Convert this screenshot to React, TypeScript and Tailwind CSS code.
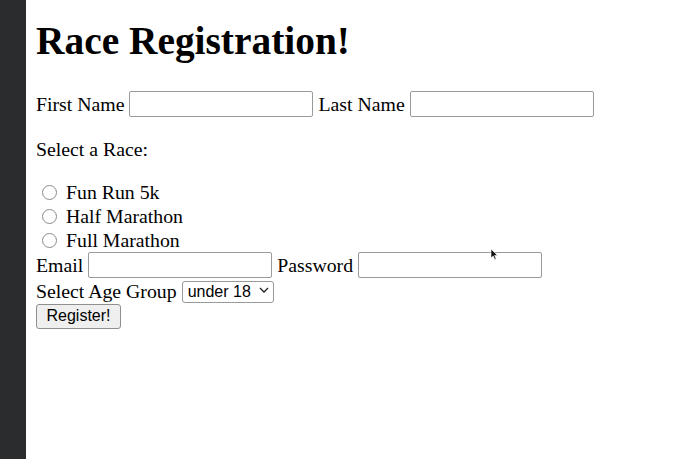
import React from "react";

const serif = { fontFamily: '"Liberation Serif", "Times New Roman", serif' };

function TextInput({ type = "text" }: { type?: string }) {
  return (
    <input
      type={type}
      className="w-[184px] h-[26px] border border-[#9a9a9a] rounded-[2px] bg-white px-1 outline-none"
    />
  );
}

function Radio({ label }: { label: string }) {
  return (
    <label className="flex items-center h-[24px] leading-[24px]">
      <span className="ml-[6px] mr-[9px] w-[15px] h-[15px] rounded-full border border-[#8c8c8c] bg-white shrink-0" />
      <input type="radio" name="race" className="hidden" />
      {label}
    </label>
  );
}

export default function App() {
  return (
    <div
      className="flex h-[459px] w-full bg-white text-black text-[19.8px] leading-[22px] relative overflow-hidden"
      style={serif}
    >
      <div className="w-[26px] shrink-0 bg-[#2b2c2e]" />

      <main className="flex-1 pl-[10px] flex flex-col">
        <h1 className="mt-[19px] text-[39.4px] leading-[45px] font-bold">
          Race Registration!
        </h1>

        <div className="mt-[27px] flex items-center h-[26px] gap-[5px]">
          <span>First Name</span>
          <TextInput />
          <span>Last Name</span>
          <TextInput />
        </div>

        <p className="mt-[21px]">Select a Race:</p>

        <div className="mt-[20px] flex flex-col">
          <Radio label="Fun Run 5k" />
          <Radio label="Half Marathon" />
          <Radio label="Full Marathon" />
        </div>

        <div className="flex items-center h-[26px] gap-[5px]">
          <span>Email</span>
          <TextInput type="email" />
          <span>Password</span>
          <TextInput type="password" />
        </div>

        <div className="mt-[1px] flex items-center h-[23px] gap-[5px]">
          <span>Select Age Group</span>
          <div className="relative">
            <select
              className="appearance-none h-[22px] w-[92px] border border-[#9a9a9a] rounded-[3px] bg-white pl-[5px] text-[16px] leading-[20px] outline-none"
              style={{ fontFamily: '"Liberation Sans", Arial, sans-serif' }}
              defaultValue="under18"
            >
              <option value="under18">under 18</option>
              <option value="18-35">18 - 35</option>
              <option value="36plus">36+</option>
            </select>
            <svg
              className="absolute right-[5px] top-[8px] pointer-events-none"
              width="10"
              height="6"
              viewBox="0 0 10 6"
              fill="none"
            >
              <path d="M1 1l4 4 4-4" stroke="#222" strokeWidth="1.3" />
            </svg>
          </div>
        </div>

        <div className="mt-[1px]">
          <button
            className="h-[25px] w-[85px] bg-[#efefef] border border-[#8f8f8f] rounded-[3px] text-[16px] leading-[20px]"
            style={{ fontFamily: '"Liberation Sans", Arial, sans-serif' }}
          >
            Register!
          </button>
        </div>
      </main>

      <svg
        className="absolute left-[490px] top-[248px] pointer-events-none"
        width="8"
        height="12"
        viewBox="0 0 8 12"
      >
        <path d="M1 1v9l2.2-2 1.6 3.4 1.3-.6-1.5-3.3H7.5z" fill="#111" stroke="#fff" strokeWidth="0.6" />
      </svg>
    </div>
  );
}
